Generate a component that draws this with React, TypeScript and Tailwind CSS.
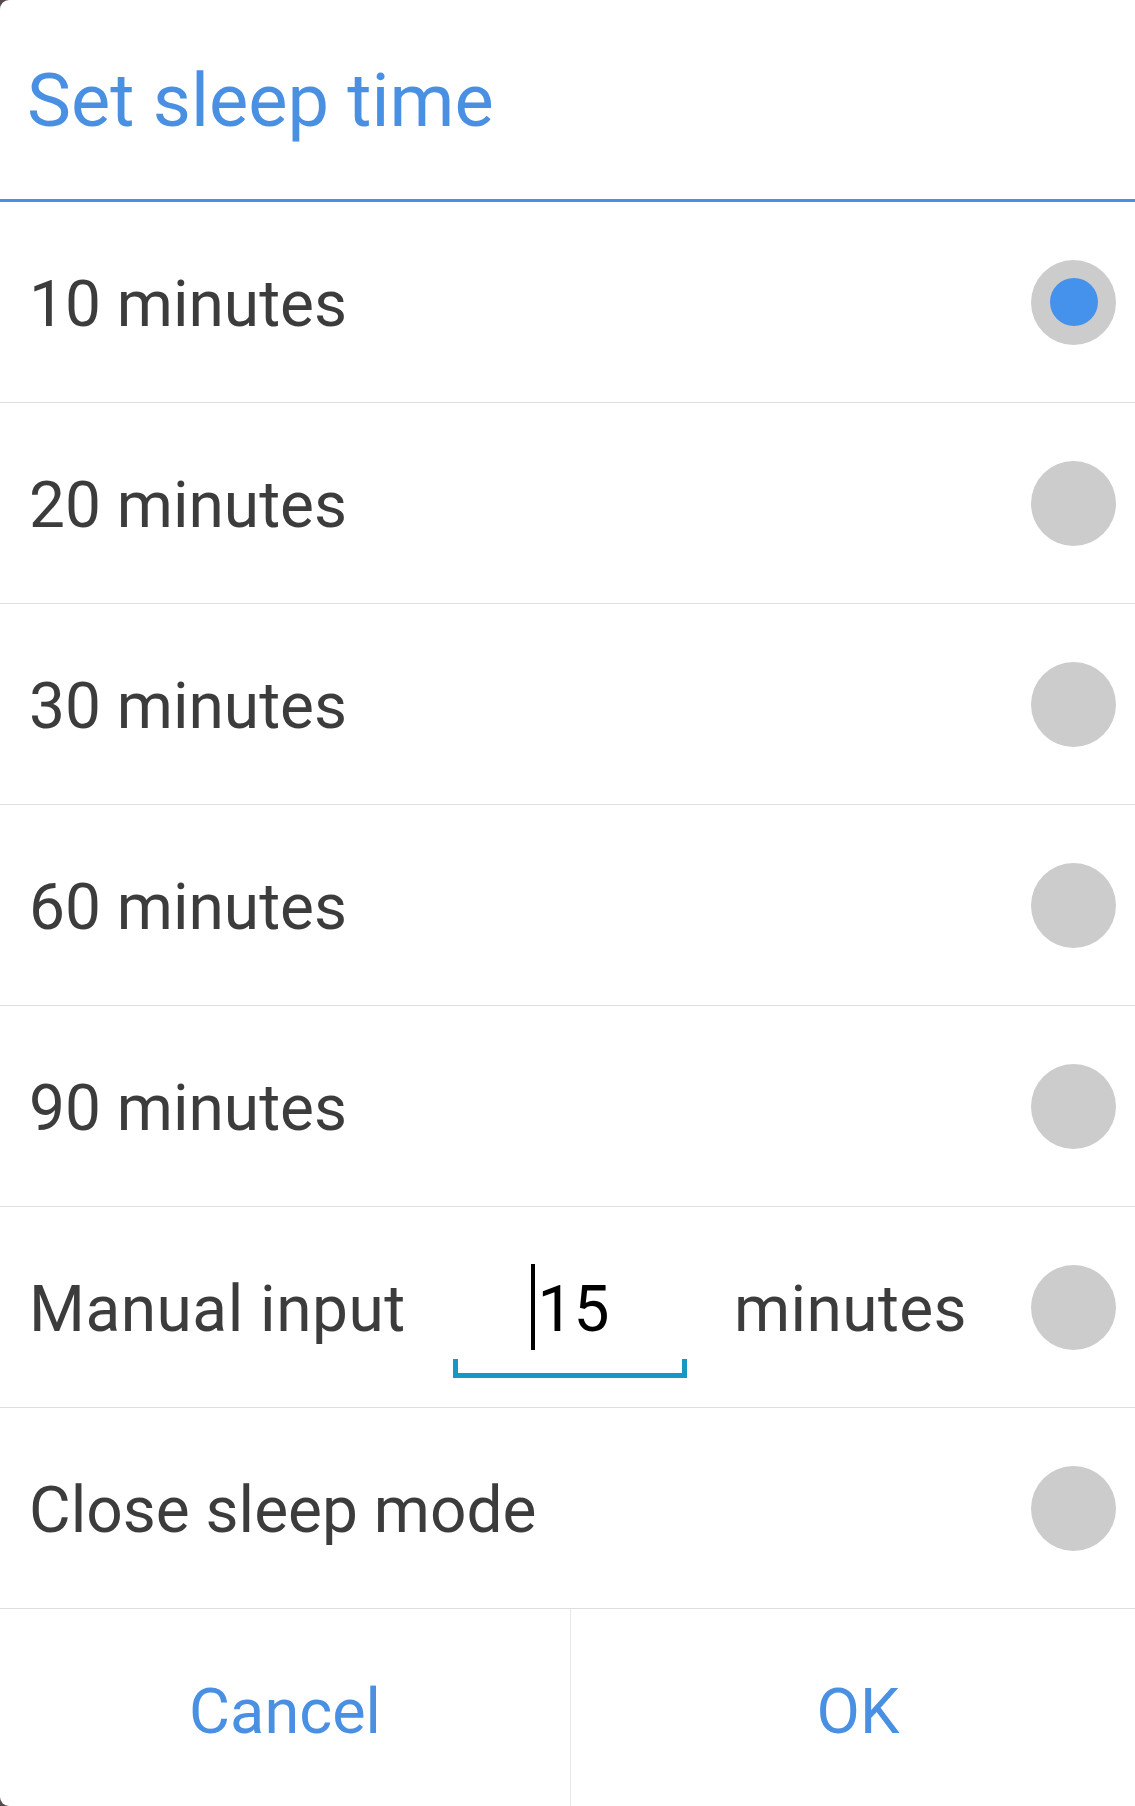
import React from "react";

const rows = ["10 minutes", "20 minutes", "30 minutes", "60 minutes", "90 minutes"];

function Radio({ checked }: { checked?: boolean }) {
  return (
    <div className="w-[85px] h-[85px] rounded-full bg-[#cccccc] flex items-center justify-center shrink-0">
      {checked && <div className="w-[48px] h-[48px] rounded-full bg-[#4492ec]" />}
    </div>
  );
}

export default function App() {
  const font = { fontFamily: "Roboto, 'Noto Sans', sans-serif" };
  return (
    <div className="w-[1135px] h-[1806px] bg-[#554b4b]" style={font}>
      <div className="w-full h-full bg-white rounded-l-[9px] flex flex-col overflow-hidden">
        <div className="h-[199px] flex items-center pl-[27px] pt-[3px] shrink-0">
          <span className="text-[#4a90e2] text-[74px] leading-none">Set sleep time</span>
        </div>
        <div className="h-[3px] bg-[#4a90e2] shrink-0" />
        {rows.map((r, i) => (
          <div key={r} className="h-[201px] border-b border-[#dedede] flex items-center pl-[29px] pr-[19px] shrink-0">
            <span className="flex-1 pt-[6px] text-[64px] leading-none text-[#3c3c3c]">{r}</span>
            <Radio checked={i === 0} />
          </div>
        ))}
        <div className="h-[201px] border-b border-[#dedede] flex items-center pl-[29px] pr-[19px] shrink-0">
          <span className="w-[424px] pt-[6px] shrink-0 text-[64px] leading-none text-[#3c3c3c] tracking-[0.5px]">Manual input</span>
          <div className="relative w-[234px] h-[86px] flex items-center justify-center shrink-0">
            <div className="w-[4px] h-[86px] bg-black mr-[3px]" />
            <span className="pt-[6px] text-[64px] leading-none text-black">15</span>
            <div className="absolute left-0 right-0 top-[95px] h-[19px] border-x-[5px] border-b-[5px] border-[#1797c4]" />
          </div>
          <span className="ml-[47px] pt-[6px] flex-1 text-[64px] leading-none text-[#3c3c3c] tracking-[0.4px]">minutes</span>
          <Radio />
        </div>
        <div className="h-[201px] border-b border-[#dedede] flex items-center pl-[29px] pr-[19px] shrink-0">
          <span className="flex-1 pt-[6px] text-[64px] leading-none text-[#3c3c3c]">Close sleep mode</span>
          <Radio />
        </div>
        <div className="flex-1 flex">
          <div className="w-[571px] border-r border-[#e8e8e8] flex items-center justify-center">
            <span className="pt-[8px] text-[63px] leading-none text-[#4a90e2]">Cancel</span>
          </div>
          <div className="flex-1 flex items-center justify-center">
            <span className="pt-[8px] text-[63px] leading-none text-[#4a90e2] pl-[10px]">OK</span>
          </div>
        </div>
      </div>
    </div>
  );
}
